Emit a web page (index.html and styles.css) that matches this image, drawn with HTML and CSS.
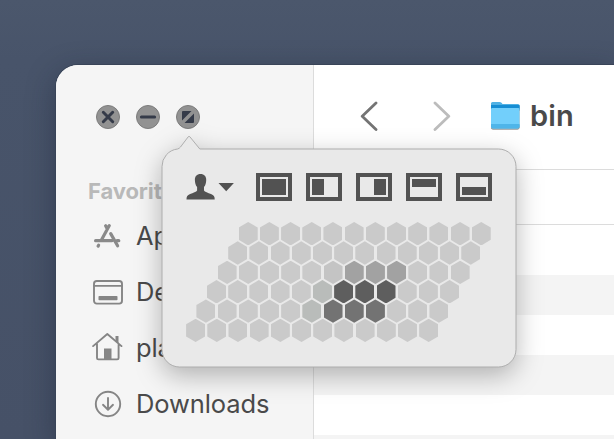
FILE: index.html
```html
<!DOCTYPE html>
<html lang="en">
<head>
<meta charset="utf-8">
<title>bin</title>
<link rel="stylesheet" href="styles.css">
</head>
<body>
<main class="window">
  <aside class="sidebar">
    <div class="traffic">
      <svg width="24" height="24" viewBox="0 0 24 24"><circle class="disc" cx="12" cy="12" r="11.5"/><path class="mark" d="M7.3 7.3l9.4 9.4M16.7 7.3l-9.4 9.4"/></svg>
      <svg width="24" height="24" viewBox="0 0 24 24"><circle class="disc" cx="12" cy="12" r="11.5"/><path class="mark" d="M5.4 12h13.2"/></svg>
      <svg width="24" height="24" viewBox="0 0 24 24"><circle class="disc" cx="12" cy="12" r="11.5"/><path class="tri" d="M7 6h8.5L6 15.500V7q0-1 1-1zM17 18H8.500L18 8.500V17q0 1-1 1z"/></svg>
    </div>
    <h2 class="heading">Favorites</h2>
    <ul class="places">
      <li><svg width="32" height="32" viewBox="0 0 32 32"><g class="thick"><path d="M13.600 5.800l1.600 2.800M17.300 5.600L9.300 20.300M3.600 20.700h16.200M25 20.700h1.800M18.700 13.600l6.900 12.200M6.600 25.200l-.5 .9"/></g></svg><span>Applications</span></li>
      <li><svg width="32" height="32" viewBox="0 0 32 32"><rect class="line" x="2" y="5" width="28" height="22.600" rx="2.800"/><path class="line" d="M2 9.900h28"/><rect class="solid" x="6.500" y="20" width="19" height="4.300" rx=".8"/></svg><span>Desktop</span></li>
      <li><svg width="32" height="32" viewBox="0 0 32 32"><path class="line" d="M1.100 14.100L15.300 2l14.200 12.100M5 12v14q0 1.400 1.400 1.400h18.800q1.400 0 1.400-1.400V12"/><path class="solid" d="M23.500 4h3v7l-3-2.500zM12 16.500h7.500v11H12z"/></svg><span>planet</span></li>
      <li><svg width="32" height="32" viewBox="0 0 32 32"><circle class="line" cx="16" cy="16" r="12.200"/><path class="line" d="M16 10v11.500M11 16.800l5 4.900 5-4.900"/></svg><span>Downloads</span></li>
    </ul>
  </aside>
  <section class="content">
    <header class="toolbar">
      <svg class="nav" width="18" height="30" viewBox="0 0 18 30"><path d="M16 2L2.200 15.200 16 28.500"/></svg>
      <svg class="nav next" width="18" height="30" viewBox="0 0 18 30"><path d="M2 2l13.800 13.200L2 28.500"/></svg>
      <svg class="folder" width="32" height="30" viewBox="0 0 32 30"><path fill="#4fb1e4" d="M2 2.500Q2 1 3.500 1h7q1.200 0 2 .8l1 1.200H29q1.500 0 1.500 1.500V9H2z"/><path fill="#168dd3" d="M2 4h28.500v5H2z"/><path fill="#72cffb" d="M2 8q0-1 1.200-1h26q1.300 0 1.300 1v17.500q0 2-2 2H4q-2 0-2-2z"/><path fill="#4fb5e9" d="M2 23h28.500v2.500q0 2-2 2H4q-2 0-2-2z"/></svg>
      <h1 class="title">bin</h1>
    </header>
    <div class="columns"></div>
    <div class="list"></div>
  </section>
</main>

<div class="popover">
  <svg class="bubble" width="356" height="234" viewBox="0 0 356 234"><path d="M16.500 14Q18.300 13.600 19.500 12L27.200 1.800Q28 .8 28.900 1.800L38.800 14H337.500A17.500 17.500 0 0 1 355 31.500V214.500A17.500 17.500 0 0 1 337.500 232H18.500A17.500 17.500 0 0 1 1 214.500V31.500A17.500 17.500 0 0 1 16.500 14z"/></svg>
  <div class="actions">
    <svg class="user" width="50" height="30" viewBox="0 0 50 30"><path d="M14.500 2c3.700 0 5.900 2.400 5.700 6.200-.1 3-.7 5-2.200 6.800v3.500c.6 1.300 4 2.200 7 3.600 2.800 1.300 3.800 2.500 3.700 5.500H.5c0-3 .8-4.200 3.600-5.500 3-1.400 6.400-2.300 7-3.600V15c-1.500-1.800-2.100-3.800-2.200-6.800C8.700 4.400 10.800 2 14.500 2zM32.500 11h15.400l-7.700 8.200z"/></svg>
    <span class="tile"><b class="full"></b></span>
    <span class="tile"><b class="left"></b></span>
    <span class="tile"><b class="right"></b></span>
    <span class="tile"><b class="top"></b></span>
    <span class="tile"><b class="bottom"></b></span>
  </div>
  <div class="hexes">
    <div class="row r0"><i></i><i></i><i></i><i></i><i></i><i></i><i></i><i></i><i></i><i></i><i></i><i></i></div>
    <div class="row r1"><i></i><i></i><i></i><i></i><i></i><i></i><i></i><i></i><i></i><i></i><i></i><i></i></div>
    <div class="row r2"><i></i><i></i><i></i><i></i><i></i><i class="faint"></i><i class="mid"></i><i class="mid"></i><i class="mid"></i><i></i><i></i><i></i></div>
    <div class="row r3"><i></i><i></i><i></i><i></i><i></i><i class="soft"></i><i class="dark"></i><i class="dark"></i><i class="dark"></i><i></i><i></i><i></i></div>
    <div class="row r4"><i></i><i></i><i></i><i></i><i></i><i class="soft"></i><i class="deep"></i><i class="deep"></i><i class="deep"></i><i></i><i></i><i></i></div>
    <div class="row r5"><i></i><i></i><i></i><i></i><i></i><i></i><i></i><i></i><i></i><i></i><i></i><i></i></div>
  </div>
</div>
</body>
</html>
```

FILE: styles.css
```css
* { box-sizing: border-box; }
body {
  margin: 0;
  width: 614px;
  height: 439px;
  overflow: hidden;
  padding: 65px 0 0 56px;
  background: linear-gradient(#4b576c, #48546a 60px, #465167);
  font-family: Inter, "Liberation Sans", sans-serif;
}
svg { display: block; flex: none; }
.window {
  display: flex;
  width: 558px;
  height: 374px;
  border-radius: 22px 0 0 0;
  overflow: hidden;
  background: #fff;
  box-shadow: 0 0 0 1px #394458, 0 8px 30px rgba(20, 28, 45, .4);
}
.sidebar {
  flex: none;
  width: 258px;
  background: #f5f5f5;
  border-right: 1px solid #dcdcdc;
}
.traffic { display: flex; gap: 16px; padding: 40px 0 0 40px; }
.disc { fill: #929292; stroke: #7c7c7c; }
.mark { fill: none; stroke: #353b49; stroke-width: 3; stroke-linecap: round; }
.tri { fill: #353b49; }
.heading {
  margin: 47px 0 0 32px;
  font-size: 22px;
  line-height: 30px;
  font-weight: 700;
  letter-spacing: -.1px;
  color: #b9b9b9;
}
.places { list-style: none; margin: 2px 0 0; padding: 0 0 0 36px; }
.places li { display: flex; align-items: center; gap: 12px; height: 56px; }
.places span { padding-bottom: 2px; font-size: 25.500px; letter-spacing: -.1px; color: #4a4a4a; }
.thick { fill: none; stroke: #8a8a8a; stroke-width: 3.200; stroke-linecap: round; }
.line { fill: none; stroke: #858585; stroke-width: 1.900; stroke-linecap: round; stroke-linejoin: round; }
.solid { fill: #858585; }
.content { flex: 1; }
.toolbar {
  display: flex;
  align-items: center;
  height: 105px;
  padding: 0 0 3px 46px;
  border-bottom: 1px solid #dcdcdc;
}
.nav { fill: none; stroke: #747474; stroke-width: 2.800; stroke-linecap: round; stroke-linejoin: round; }
.next { margin-left: 55px; stroke: #bcbcbc; }
.folder { margin-left: 38px; filter: drop-shadow(0 1px .7px rgba(0, 0, 0, .4)); }
.title { margin: 0 0 0 9px; font-size: 29px; font-weight: 600; letter-spacing: .2px; color: #4a4a4a; }
.columns { height: 55px; border-bottom: 1px solid #dcdcdc; }
.list { height: 204px; margin-top: 10px; background: repeating-linear-gradient(#fff 0 40px, #f4f4f4 40px 80px); }

.popover {
  position: absolute;
  z-index: 1;
  left: 161px;
  top: 135px;
  width: 356px;
  height: 234px;
  padding: 37px 24px 0 25px;
}
.bubble {
  position: absolute;
  left: 0;
  top: 0;
  z-index: -1;
  overflow: visible;
  filter: drop-shadow(0 8px 13px rgba(0, 0, 0, .28));
}
.bubble path { fill: #e9e9e9; stroke: #adadad; stroke-width: 1; }
.actions { display: flex; align-items: center; gap: 14px; height: 30px; }
.user { margin-right: 6px; fill: #525252; }
.tile { display: flex; flex: none; width: 36px; height: 28px; border: 4px solid #525252; padding: 2px; }
.tile b { background: #525252; }
.full { width: 24px; height: 16px; }
.left { width: 12px; height: 16px; }
.right { width: 12px; height: 16px; margin-left: auto; }
.top { width: 24px; height: 8px; }
.bottom { width: 24px; height: 8px; align-self: flex-end; }
.hexes { display: grid; grid-auto-rows: 19.350px; padding-top: 20px; }
.row { display: flex; gap: 2.200px; height: 23.400px; }
.row i {
  flex: none;
  width: 19px;
  height: 23.400px;
  background: #cacaca;
  clip-path: polygon(50% 0, 100% 24%, 100% 76%, 50% 100%, 0 76%, 0 24%);
}
.r0 { padding-left: 52.700px; }
.r1 { padding-left: 42.200px; }
.r2 { padding-left: 31.600px; }
.r3 { padding-left: 21px; }
.r4 { padding-left: 10.400px; }
.r5 { padding-left: .1px; }
.row .faint { background: #c4c4c4; }
.row .soft { background: #b9bcba; }
.row .mid { background: #a2a2a2; }
.row .dark { background: #5e5e5e; }
.row .deep { background: #737373; }
```
